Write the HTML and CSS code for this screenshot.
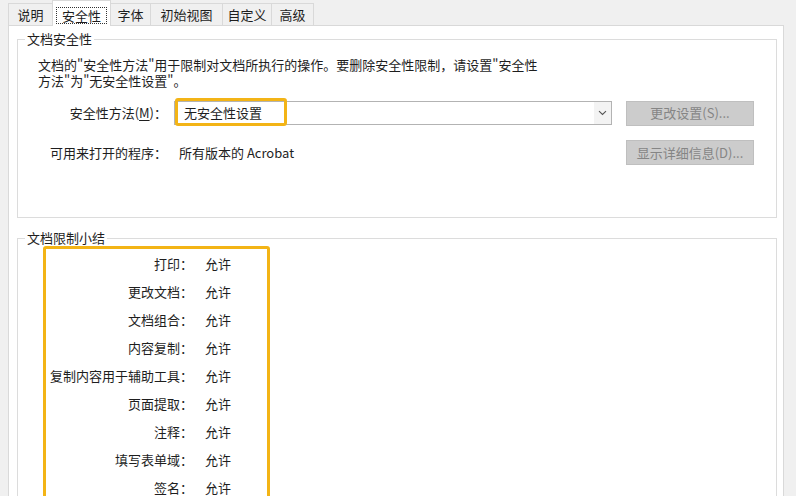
FILE: index.html
```html
<!DOCTYPE html>
<html lang="zh-CN">
<head>
<meta charset="utf-8">
<title>文档属性 - 安全性</title>
<link rel="stylesheet" href="styles.css">
</head>
<body>
<div class="dialog">
  <div class="tabs">
    <div class="tab t1">说明</div>
    <div class="tab t2 active"><span class="focus">安全性</span></div>
    <div class="tab t3">字体</div>
    <div class="tab t4">初始视图</div>
    <div class="tab t5">自定义</div>
    <div class="tab t6">高级</div>
  </div>
  <div class="panel">
    <fieldset class="group security">
      <legend>文档安全性</legend>
      <div class="group-body">
        <p class="desc">文档的"安全性方法"用于限制对文档所执行的操作。要删除安全性限制，请设置"安全性<br>方法"为"无安全性设置"。</p>
        <div class="form">
          <span class="lbl">安全性方法(<u>M</u>)：</span>
          <div class="combo">
            <span class="combo-text">无安全性设置</span>
            <span class="arrow"><svg width="9" height="6" viewBox="0 0 9 6"><path d="M1 1.2 L4.5 4.5 L8 1.2" fill="none" stroke="#555" stroke-width="1.1"/></svg></span>
            <span class="highlight"></span>
          </div>
          <button class="btn" disabled>更改设置(S)...</button>
          <span class="lbl">可用来打开的程序：</span>
          <span class="value">所有版本的 Acrobat</span>
          <button class="btn" disabled>显示详细信息(D)...</button>
        </div>
      </div>
    </fieldset>
    <fieldset class="group summary">
      <legend>文档限制小结</legend>
      <div class="rules">
        <span class="k">打印：</span><span class="v">允许</span>
        <span class="k">更改文档：</span><span class="v">允许</span>
        <span class="k">文档组合：</span><span class="v">允许</span>
        <span class="k">内容复制：</span><span class="v">允许</span>
        <span class="k">复制内容用于辅助工具：</span><span class="v">允许</span>
        <span class="k">页面提取：</span><span class="v">允许</span>
        <span class="k">注释：</span><span class="v">允许</span>
        <span class="k">填写表单域：</span><span class="v">允许</span>
        <span class="k">签名：</span><span class="v">允许</span>
      </div>
    </fieldset>
  </div>
</div>
</body>
</html>
```

FILE: styles.css
```css
html, body {
  margin: 0;
  height: 496px;
  overflow: hidden;
}

body {
  background: #f0f0f0;
  font-family: "Noto Sans CJK SC", "Noto Sans", sans-serif;
  font-size: 13px;
  line-height: 16px;
  color: #1e1e1e;
}

.tabs {
  display: flex;
  align-items: flex-end;
  height: 25px;
  padding-left: 8px;
  position: relative;
  z-index: 1;
}

.tab {
  box-sizing: border-box;
  height: 22px;
  margin-right: -1px;
  border: 1px solid #d9d9d9;
  border-bottom: none;
  background: #f0f0f0;
  display: flex;
  align-items: center;
  justify-content: center;
  white-space: nowrap;
}

.t1 { width: 45px; }
.t2 { width: 59px; }
.t3 { width: 41px; }
.t4 { width: 73px; }
.t5 { width: 50px; }
.t6 { width: 43px; }

.tab.active {
  height: 26px;
  margin-bottom: -1px;
  padding-top: 3px;
  background: #fff;
}

.focus {
  border: 1px dotted #333;
  padding: 0 5px;
  line-height: 15px;
}

.panel {
  box-sizing: border-box;
  height: 471px;
  margin: 0 12px 0 8px;
  padding: 5px 6px 0 8px;
  background: #fff;
  border: 1px solid #d9d9d9;
  border-bottom: none;
}

.group {
  margin: 0;
  padding: 0;
  min-width: 0;
  border: 1px solid #dcdcdc;
  box-sizing: border-box;
}

.group legend {
  margin-left: 7px;
  padding: 0 2px;
  line-height: 16px;
}

.security {
  height: 187px;
}

.group-body {
  padding: 0 21px 0 20px;
}

.desc {
  margin: 10px 0 0;
}

.form {
  display: grid;
  grid-template-columns: 129px 438px 128px;
  grid-template-rows: 24px 25px;
  column-gap: 7px;
  row-gap: 15px;
  margin-top: 12px;
  align-items: center;
}

.form .btn {
  margin-left: 7px;
}

.lbl {
  text-align: right;
  white-space: nowrap;
}

.lbl u {
  text-decoration-thickness: 1px;
  text-underline-offset: 2px;
}

.value {
  padding-left: 5px;
  white-space: nowrap;
}

.combo {
  position: relative;
  box-sizing: border-box;
  height: 24px;
  border: 1px solid #b3b3b3;
  display: flex;
  align-items: center;
  background: #fff;
}

.combo-text {
  flex: 1;
  padding-left: 9px;
}

.arrow {
  width: 17px;
  height: 22px;
  display: flex;
  align-items: center;
  justify-content: center;
  background: #f3f3f3;
}

.highlight {
  position: absolute;
  left: 0;
  top: -4px;
  width: 112px;
  height: 28px;
  box-sizing: border-box;
  border: 3px solid #f3b416;
  border-radius: 3px;
}

.btn {
  box-sizing: border-box;
  height: 25px;
  width: 128px;
  padding: 0;
  border: 1px solid #bfbfbf;
  background: #cccccc;
  color: #858585;
  font: inherit;
  line-height: 16px;
}

.summary {
  margin-top: 12px;
  height: 300px;
}

.rules {
  box-sizing: border-box;
  width: 227px;
  margin-left: 25px;
  padding-top: 1px;
  border: 3px solid #f3b416;
  border-radius: 3px;
  display: grid;
  grid-template-columns: 147px 1fr;
  grid-auto-rows: 28px;
  column-gap: 12px;
  align-items: center;
}

.k {
  text-align: right;
  white-space: nowrap;
  padding-left: 4px;
}

.v {
  white-space: nowrap;
}
```
